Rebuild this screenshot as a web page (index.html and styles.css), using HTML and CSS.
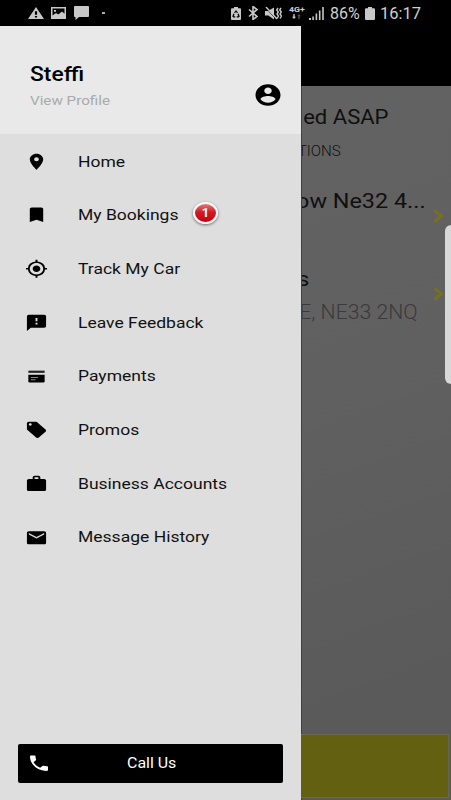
FILE: index.html
```html
<!DOCTYPE html>
<html lang="en">
<head>
<meta charset="utf-8">
<title>Menu</title>
<link rel="stylesheet" href="styles.css">
</head>
<body>
<div class="phone">
  <header class="status">
    <div class="status-left">
      <svg class="s-warn" viewBox="0 0 22 20" preserveAspectRatio="none"><path d="M11 0 22 20H0zM9.500 7v6h3V7zm0 8v2.600h3V15z" fill-rule="evenodd"/></svg>
      <svg class="s-image" viewBox="0 0 15 12" preserveAspectRatio="none"><path fill-rule="evenodd" d="M0 0h15v12H0zM1.500 1.500v7L5 6l2.300 1.600L11 4.500l2.500 2.300V1.500zM3 3h2v1.800H3z"/></svg>
      <svg class="s-chat" viewBox="0 0 15 14" preserveAspectRatio="none"><path d="M1 0h13q1 0 1 1v9q0 1-1 1H5l-3.500 3V11H1q-1 0-1-1V1q0-1 1-1z"/></svg>
      <i class="dot"></i>
    </div>
    <div class="status-right">
      <svg class="s-recycle" viewBox="0 0 10 13" preserveAspectRatio="none"><path fill-rule="evenodd" d="M3 0h4v1.300h2q1 0 1 1V12q0 1-1 1H1q-1 0-1-1V2.300q0-1 1-1h2zM5 3 3 5.700l1 .6 1-1.500 1 1.500 1-.6zM2.300 6.500 1.300 9.500 2.500 10.500H4.300V9.300H2.800L3.500 7.300zM7.700 6.500 6.500 7.300l.7 2H5.700v1.200h2l1-1z"/></svg>
      <svg class="s-bt" viewBox="0 0 10 14" preserveAspectRatio="none"><path d="M1 3.500 9 10.500 5 13.500V.5L9 3.500 1 10.500" fill="none" stroke="#c8c8c8" stroke-width="1.600"/></svg>
      <svg class="s-mute" viewBox="0 0 17 13" preserveAspectRatio="none"><path d="M0 4h3l6-3.500v12L3.500 8.500H0z"/><path d="M0 0 11 12" fill="none" stroke="#000" stroke-width="1"/><path d="M1 0 12 12M13 1l-1.300 2L13.300 5 12 7l1.500 2L12 11.500M16 1l-1.300 2L16.300 5 15 7l1.500 2L15 11.500" fill="none" stroke="#c8c8c8" stroke-width="1.400"/></svg>
      <div class="net"><span>4G+</span><svg viewBox="0 0 9 5"><path d="M2 5 0 2.700h1.300V0h1.400v2.700H4z"/><path class="dim" d="M7 0 5 2.300h1.300V5h1.400V2.300H9z"/></svg></div>
      <svg class="s-signal" viewBox="0 0 15 13" preserveAspectRatio="none"><path d="M0 11h2v2H0zM3.300 9.500h1.600V13H3.300zM6.600 6.500h1.600V13H6.600zM9.900 3.500h1.600V13H9.900zM13.200 0h1.600v13h-1.600z"/></svg>
      <span class="pct"><b class="x">86%</b></span>
      <svg class="s-batt" viewBox="0 0 10 13" preserveAspectRatio="none"><path d="M3 0h4v1.300h2q1 0 1 1V12q0 1-1 1H1q-1 0-1-1V2.300q0-1 1-1h2z"/></svg>
      <span class="clock"><b class="x">16:17</b></span>
    </div>
  </header>
  <div class="content">
    <aside class="drawer">
      <div class="profile">
        <div class="who">
          <div class="name"><b class="x">Steffi</b></div>
          <div class="view"><b class="x">View Profile</b></div>
        </div>
        <svg class="avatar" viewBox="0 0 24 24" preserveAspectRatio="none"><path d="M12 2C6.480 2 2 6.480 2 12s4.480 10 10 10 10-4.480 10-10S17.520 2 12 2zm0 3c1.660 0 3 1.340 3 3s-1.340 3-3 3-3-1.340-3-3 1.340-3 3-3zm0 14.200c-2.500 0-4.710-1.280-6-3.220.03-1.990 4-3.080 6-3.080 1.990 0 5.970 1.090 6 3.080-1.290 1.940-3.500 3.220-6 3.220z"/></svg>
      </div>
      <nav class="menu">
        <a class="item"><svg viewBox="0 0 24 24" preserveAspectRatio="none"><path d="M12 2C8.130 2 5 5.130 5 9c0 5.250 7 13 7 13s7-7.750 7-13c0-3.870-3.130-7-7-7zm0 9.500a2.500 2.500 0 0 1 0-5 2.500 2.500 0 0 1 0 5z"/></svg><b class="x">Home</b></a>
        <a class="item"><svg viewBox="0 0 24 24" preserveAspectRatio="none"><path d="M17 3H7c-1.100 0-1.990.9-1.990 2L5 21l7-3 7 3V5c0-1.100-.9-2-2-2z"/></svg><b class="x">My Bookings</b><span class="badge">1</span></a>
        <a class="item"><svg viewBox="0 0 24 24" preserveAspectRatio="none"><path d="M12 8c-2.210 0-4 1.790-4 4s1.790 4 4 4 4-1.790 4-4-1.790-4-4-4zm8.940 3A8.994 8.994 0 0 0 13 3.060V1h-2v2.060A8.994 8.994 0 0 0 3.060 11H1v2h2.060A8.994 8.994 0 0 0 11 20.940V23h2v-2.060A8.994 8.994 0 0 0 20.940 13H23v-2h-2.060zM12 19c-3.870 0-7-3.130-7-7s3.130-7 7-7 7 3.130 7 7-3.130 7-7 7z"/></svg><b class="x">Track My Car</b></a>
        <a class="item"><svg viewBox="0 0 24 24" preserveAspectRatio="none"><path d="M20 2H4c-1.100 0-1.990.9-1.990 2L2 22l4-4h14c1.100 0 2-.9 2-2V4c0-1.100-.9-2-2-2zm-7 12h-2v-2h2v2zm0-4h-2V6h2v4z"/></svg><b class="x">Leave Feedback</b></a>
        <a class="item"><svg viewBox="0 0 24 24" preserveAspectRatio="none"><path d="M3.500 4.500h17v2.700h-17z" opacity=".85"/><path fill-rule="evenodd" d="M3.500 9.500h17v8q0 1.500-1.500 1.500H5q-1.500 0-1.500-1.500z"/><path d="M6 12.300h7.500v1.300H6zM6 15h5v1.300H6z" fill="#888"/></svg><b class="x">Payments</b></a>
        <a class="item"><svg viewBox="0 0 24 24" preserveAspectRatio="none"><path d="M21.410 11.580l-9-9C12.050 2.220 11.550 2 11 2H4c-1.100 0-2 .9-2 2v7c0 .55.220 1.050.590 1.420l9 9c.36.360.860.580 1.410.580.550 0 1.050-.220 1.410-.590l7-7c.370-.360.590-.860.590-1.410 0-.550-.230-1.060-.590-1.420zM5.500 7C4.670 7 4 6.330 4 5.500S4.670 4 5.500 4 7 4.670 7 5.500 6.330 7 5.500 7z"/></svg><b class="x">Promos</b></a>
        <a class="item"><svg viewBox="0 0 24 24" preserveAspectRatio="none"><path d="M20 6h-4V4c0-1.110-.890-2-2-2h-4c-1.110 0-2 .890-2 2v2H4c-1.110 0-1.990.890-1.990 2L2 19c0 1.110.890 2 2 2h16c1.110 0 2-.890 2-2V8c0-1.110-.890-2-2-2zm-6 0h-4V4h4v2z"/></svg><b class="x">Business Accounts</b></a>
        <a class="item"><svg viewBox="0 0 24 24" preserveAspectRatio="none"><path d="M20 4H4c-1.100 0-1.990.9-1.990 2L2 18c0 1.100.9 2 2 2h16c1.100 0 2-.9 2-2V6c0-1.100-.9-2-2-2zm0 4l-8 5-8-5V6l8 5 8-5v2z"/></svg><b class="x">Message History</b></a>
      </nav>
      <a class="call">
        <svg viewBox="0 0 24 24" preserveAspectRatio="none"><path d="M6.620 10.790c1.440 2.830 3.760 5.140 6.590 6.590l2.200-2.200c.270-.270.670-.360 1.020-.240 1.120.370 2.330.570 3.570.570.550 0 1 .450 1 1V20c0 .550-.450 1-1 1-9.390 0-17-7.610-17-17 0-.550.450-1 1-1h3.500c.550 0 1 .450 1 1 0 1.250.200 2.450.570 3.570.110.350.030.740-.250 1.020l-2.200 2.200z"/></svg>
        <b class="x">Call Us</b>
      </a>
    </aside>
    <main class="screen">
      <div class="appbar"></div>
      <div class="booking">
        <div class="line when"><b class="x">ed ASAP</b></div>
        <div class="line section"><b class="x">TIONS</b></div>
        <div class="line pickup"><b class="x">ow Ne32 4...</b></div>
        <svg class="chev" viewBox="0 0 11 14"><path d="M1.500 1.500 8.500 7 1.500 12.500"/></svg>
        <div class="line place"><b class="x">s</b></div>
        <svg class="chev second" viewBox="0 0 11 14"><path d="M1.500 1.500 8.500 7 1.500 12.500"/></svg>
        <div class="line dest"><b class="x">E, NE33 2NQ</b></div>
      </div>
      <div class="action"></div>
      <div class="edge-handle"></div>
    </main>
  </div>
</div>
</body>
</html>
```
FILE: styles.css
```css
* { box-sizing: border-box; }
body { margin: 0; font-family: Roboto, "Liberation Sans", sans-serif; }
svg { display: block; flex: none; }
.x { display: inline-block; font-weight: inherit; white-space: nowrap; transform: scaleX(1.17); transform-origin: left center; }

.phone { width: 451px; height: 800px; display: flex; flex-direction: column; overflow: hidden; background: #000; }

.status { height: 26px; flex: none; display: flex; justify-content: space-between; padding: 0 0 0 28px; fill: #c8c8c8; color: #d0d0d0; }
.status-left { display: flex; align-items: center; height: 26px; }
.s-warn { width: 16px; height: 12px; }
.s-image { width: 15px; height: 12px; margin-left: 7px; }
.s-chat { width: 15px; height: 14px; margin-left: 8px; }
.dot { width: 3px; height: 2px; background: #aaa; margin-left: 13px; }
.status-right { width: 220px; display: flex; align-items: center; height: 26px; }
.s-recycle { width: 10px; height: 13px; }
.s-bt { width: 10px; height: 14px; margin-left: 7px; }
.s-mute { width: 17px; height: 13px; margin-left: 7px; }
.net { width: 16px; margin-left: 7px; height: 13px; font-size: 7px; line-height: 7px; font-weight: 700; }
.net span { display: block; white-space: nowrap; transform: scaleX(1.25); transform-origin: left; }
.net svg { width: 9px; height: 5px; margin: 0 0 0 3px; }
.dim { opacity: .4; }
.s-signal { width: 15px; height: 13px; margin-left: 4px; }
.pct { width: 30px; margin-left: 6px; font-size: 16.5px; line-height: 26px; padding-top: 1px; }
.pct .x { transform: scaleX(.97); }
.s-batt { width: 10px; height: 13px; margin-left: 5px; }
.clock { margin-left: 5px; font-size: 16.5px; line-height: 26px; padding-top: 1px; }
.clock .x { transform: scaleX(1); }

.content { flex: 1; display: flex; min-height: 0; }
.drawer { width: 301px; flex: none; display: flex; flex-direction: column; background: #dedede; }
.profile { height: 108px; flex: none; background: #e9e9e9; display: flex; justify-content: space-between; padding: 37px 18px 0 30px; }
.name { padding-top: 1px; font-size: 19.5px; line-height: 22px; font-weight: 500; color: #000; }
.name .x { transform: scaleX(1.17); }
.view { margin-top: 5px; font-size: 13.5px; line-height: 18px; color: #aaa; }
.view .x { transform: scaleX(1.125); }
.avatar { width: 30px; height: 26px; margin-top: 19px; }

.menu { display: flex; flex-direction: column; padding-top: .7px; }
.item { height: 53.7px; display: flex; align-items: center; padding-left: 25px; font-size: 15.5px; color: #111; }
.item svg { width: 23px; height: 19.500px; margin-right: 30px; }
.item .x { transform: scaleX(1.13); }
.badge { width: 25px; height: 22px; margin: -5px 0 0 26px; border: 2px solid #f8f8f8; border-radius: 50%; background: linear-gradient(#e87878, #d01c24 45%, #c8000c); box-shadow: 0 1px 3px #0008; color: #fff; font-size: 13px; line-height: 18px; font-weight: 700; text-align: center; }

.call { margin: auto 18px 17.500px 18px; width: 265px; height: 39px; border-radius: 2px; background: #000; color: #fff; display: flex; align-items: center; padding: 1px 0 0 9px; font-size: 14.5px; }
.call svg { width: 24px; height: 20.500px; fill: #fff; margin-right: 76px; }
.call .x { transform: scaleX(1.1); }

.screen { flex: 1; min-width: 0; position: relative; display: flex; flex-direction: column; border-left: 1px solid #404040; background: linear-gradient(160deg, #626262 15%, #606060 45%, #5a5a5a 85%); }
.appbar { height: 60px; flex: none; background: #000; margin-left: -1px; }
.booking { flex: 1; overflow: hidden; display: flex; flex-direction: column; align-items: flex-end; color: #101010; }
.line { width: 100%; flex: none; display: flex; justify-content: flex-end; line-height: 24px; height: 24px; overflow: hidden; }
.line .x { flex: none; transform-origin: right center; }
.when { margin-top: 20px; padding-right: 63px; font-size: 19.5px; }
.when .x { transform: scaleX(1.13); }
.section { margin-top: 9px; padding-right: 110px; font-size: 14px; font-weight: 300; }
.section .x { transform: scaleX(1.08); }
.pickup { margin-top: 26px; padding-right: 25px; font-size: 20.500px; }
.pickup .x { transform: scaleX(1.14); }
.place { margin-top: 54px; padding-right: 142px; font-size: 20px; }
.dest { margin-top: 9px; padding-right: 33px; font-size: 20px; font-weight: 300; color: #3a3a3a; }
.dest .x { transform: scaleX(1.06); }
.chev { width: 11px; height: 14px; margin: -4px 7px -10px 0; fill: none; stroke: #77701f; stroke-width: 3; }
.action { flex: none; height: 62px; margin: 0 3px 3px -1px; background: #646012; box-shadow: 0 0 0 1px #6a6850; clip-path: inset(-1px -1px -1px 0); }
.edge-handle { position: absolute; right: 0; top: 199px; width: 6px; height: 159px; border-radius: 6px 0 0 6px; background: #d8d8d8; }
```
